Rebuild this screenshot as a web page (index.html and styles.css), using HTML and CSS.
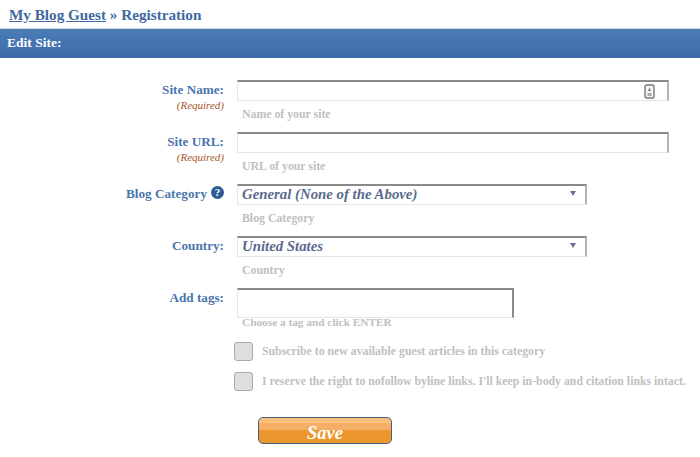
FILE: index.html
```html
<!DOCTYPE html>
<html lang="en">

<head>
    <meta charset="utf-8">
    <title>My Blog Guest - Registration</title>
    <link rel="stylesheet" href="styles.css">
</head>

<body>
    <h1 class="page-title"><a href="#">My Blog Guest</a> » Registration</h1>
    <h2 class="section-bar">Edit Site:</h2>

    <form class="site-form">
        <div class="form-row">
            <div class="form-label">
                <label>Site Name:</label>
                <span class="required">(Required)</span>
            </div>
            <div class="form-field">
                <div class="text-box wide with-icon">
                    <svg class="key-icon" width="11" height="15" viewBox="0 0 11 15">
                        <rect x="1" y="1" width="9" height="13" rx="1.5" fill="#f4f4f4" stroke="#77777f" stroke-width="1.4" />
                        <path d="M5.5 3.5 L7 7 H4 Z" fill="#77777f" />
                        <rect x="3.5" y="9" width="4" height="3" fill="#aaaaaa" />
                    </svg>
                </div>
                <div class="hint">Name of your site</div>
            </div>
        </div>

        <div class="form-row">
            <div class="form-label">
                <label>Site URL:</label>
                <span class="required">(Required)</span>
            </div>
            <div class="form-field">
                <div class="text-box wide"></div>
                <div class="hint">URL of your site</div>
            </div>
        </div>

        <div class="form-row">
            <div class="form-label has-help">
                <label>Blog Category</label>
                <span class="help-icon">?</span>
            </div>
            <div class="form-field">
                <div class="text-box select-box">
                    <span>General (None of the Above)</span>
                    <i class="arrow"></i>
                </div>
                <div class="hint">Blog Category</div>
            </div>
        </div>

        <div class="form-row">
            <div class="form-label">
                <label>Country:</label>
            </div>
            <div class="form-field">
                <div class="text-box select-box">
                    <span>United States</span>
                    <i class="arrow"></i>
                </div>
                <div class="hint">Country</div>
            </div>
        </div>

        <div class="form-row tags-row">
            <div class="form-label">
                <label>Add tags:</label>
            </div>
            <div class="form-field">
                <div class="text-box tags-box"></div>
                <div class="hint tags-hint">Choose a tag and click ENTER</div>
            </div>
        </div>

        <div class="check-row">
            <span class="check-box"></span>
            <span class="check-text">Subscribe to new available guest articles in this category</span>
        </div>
        <div class="check-row">
            <span class="check-box"></span>
            <span class="check-text">I reserve the right to nofollow byline links. I'll keep in-body and citation links intact.</span>
        </div>

        <button type="button" class="save-btn">Save</button>
    </form>
</body>

</html>
```

FILE: styles.css
```css
body {
    font-family: "Liberation Serif", serif;
    font-weight: bold;
    margin: 0;
    padding: 0;
    background-color: white;
}

.page-title {
    margin: 0;
    height: 28px;
    padding-left: 9px;
    font-size: 15.2px;
    line-height: 30px;
    color: #41699f;
    border-bottom: 1px solid #cddbe9;
}

.page-title a {
    color: #41699f;
}

.section-bar {
    margin: 0;
    height: 29px;
    padding-left: 7px;
    font-size: 13.5px;
    line-height: 27px;
    color: white;
    background: linear-gradient(#4a7cb7, #3f6ca9);
}

.site-form {
    padding-top: 22px;
}

.form-row {
    display: flex;
    height: 52px;
}

.form-label {
    width: 224px;
    margin-right: 13px;
    text-align: right;
    font-size: 13.2px;
    line-height: 20px;
    color: #4a76ad;
}

.form-label label {
    display: block;
}

.has-help {
    display: flex;
    justify-content: flex-end;
    align-items: flex-start;
    gap: 4px;
}

.required {
    display: block;
    font-size: 11px;
    line-height: 12px;
    margin-top: -1px;
    font-style: italic;
    font-weight: normal;
    color: #a8562c;
}

.help-icon {
    width: 13px;
    height: 13px;
    margin-top: 2px;
    border-radius: 50%;
    font-size: 11px;
    line-height: 13px;
    text-align: center;
    color: white;
    background-color: #2c5a94;
}

.form-field {
    display: flex;
    flex-direction: column;
}

.text-box {
    display: flex;
    align-items: center;
    justify-content: space-between;
    box-sizing: border-box;
    height: 21px;
    border: 1px solid #e6e6e6;
    border-top: 2px solid #8a8a8a;
    border-right: 2px solid #b4b4b4;
    background-color: white;
}

.wide {
    width: 432px;
}

.with-icon {
    justify-content: flex-end;
}

.key-icon {
    margin-right: 12px;
}

.select-box {
    width: 350px;
    padding: 0 9px 2px 4px;
    font-size: 14.8px;
    font-style: italic;
    color: #596a8c;
}

.arrow {
    width: 0;
    height: 0;
    margin-bottom: 1px;
    border-left: 3px solid transparent;
    border-right: 3px solid transparent;
    border-top: 5px solid #666f96;
}

.tags-box {
    width: 277px;
    height: 30px;
    border-right-color: #8a8a8a;
}

.hint {
    margin-top: 6px;
    padding-left: 5px;
    font-size: 11.8px;
    line-height: 14px;
    color: #c0c0c0;
}

.tags-hint {
    margin-top: -3px;
    font-size: 11.3px;
}

.tags-row {
    height: 53px;
}

.check-row {
    display: flex;
    align-items: center;
    height: 20px;
    margin-bottom: 10px;
    padding-left: 234px;
}

.check-box {
    box-sizing: border-box;
    width: 19px;
    height: 19px;
    margin-right: 9px;
    border: 1px solid #a9a9a9;
    border-radius: 3px;
    background-color: #dedede;
}

.check-text {
    font-size: 11.8px;
    color: #c0c0c0;
}

.save-btn {
    display: block;
    box-sizing: border-box;
    width: 134px;
    height: 27px;
    margin: 26px 0 0 258px;
    padding: 4px 0 0;
    border: 1px solid #4a5f80;
    border-radius: 5px;
    font-family: "Liberation Serif", serif;
    font-size: 18.5px;
    line-height: 20px;
    font-weight: bold;
    font-style: italic;
    color: white;
    background: linear-gradient(#f8c07d 0, #f8c07d 5px, #f4ae66 5px, #f4ae66 12px, #ec982f 12px, #ec982f 100%);
}
```
